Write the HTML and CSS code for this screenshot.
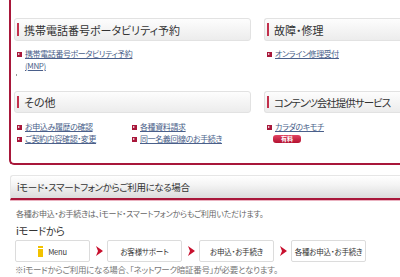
FILE: index.html
```html
<!DOCTYPE html>
<html lang="ja">
<head>
<meta charset="utf-8">
<link rel="stylesheet" href="styles.css">
</head>
<body>
<div class="panel">
  <div class="row row1">
    <section class="col left">
      <h2 class="hd">携帯電話番号ポータビリティ予約</h2>
      <ul class="links">
        <li><span class="bul"></span><a href="#">携帯電話番号ポータビリティ予約<br>(MNP)</a></li>
      </ul>
      <span class="tick"></span>
    </section>
    <section class="col right">
      <h2 class="hd">故障・修理</h2>
      <ul class="links">
        <li><span class="bul"></span><a href="#">オンライン修理受付</a></li>
      </ul>
    </section>
  </div>
  <div class="row row2">
    <section class="col left">
      <h2 class="hd">その他</h2>
      <div class="two">
        <ul class="links">
          <li><span class="bul"></span><a href="#">お申込み履歴の確認</a></li>
          <li><span class="bul"></span><a href="#">ご契約内容確認・変更</a></li>
        </ul>
        <ul class="links">
          <li><span class="bul"></span><a href="#">各種資料請求</a></li>
          <li><span class="bul"></span><a href="#">同一名義回線のお手続き</a></li>
        </ul>
      </div>
    </section>
    <section class="col right">
      <h2 class="hd narrow">コンテンツ会社提供サービス</h2>
      <ul class="links">
        <li><span class="bul"></span><a href="#">カラダのキモチ</a></li>
      </ul>
      <span class="badge">有料</span>
    </section>
  </div>
</div>

<section class="imode">
  <h2 class="bighd">iモード・スマートフォンからご利用になる場合</h2>
  <p class="desc">各種お申込・お手続きは、iモード・スマートフォンからもご利用いただけます。</p>
  <h3 class="sub">iモードから</h3>
  <div class="steps">
    <div class="step"><svg class="imark" width="5" height="11" viewBox="0 0 5 11"><rect x="0" y="0" width="5" height="2" fill="#f2c200"/><rect x="0" y="3" width="5" height="8" fill="#f2c200"/></svg>Menu</div>
    <svg class="arr" width="8" height="10" viewBox="0 0 8 10"><path d="M1 0 L8 5 L1 10 L3 5 Z" fill="#c8102e"/></svg>
    <div class="step">お客様サポート</div>
    <svg class="arr" width="8" height="10" viewBox="0 0 8 10"><path d="M1 0 L8 5 L1 10 L3 5 Z" fill="#c8102e"/></svg>
    <div class="step">お申込・お手続き</div>
    <svg class="arr" width="8" height="10" viewBox="0 0 8 10"><path d="M1 0 L8 5 L1 10 L3 5 Z" fill="#c8102e"/></svg>
    <div class="step">各種お申込・お手続き</div>
  </div>
  <p class="note">※iモードからご利用になる場合、「ネットワーク暗証番号」が必要となります。</p>
</section>
</body>
</html>
```

FILE: styles.css
```css
* { box-sizing: border-box; margin: 0; padding: 0; }
html, body { background: #fff; overflow: hidden; }
body {
  width: 400px;
  height: 277px;
  font-family: "Noto Sans CJK JP", "Noto Sans", sans-serif;
  font-feature-settings: "palt";
  color: #333;
}
ul { list-style: none; }

.panel {
  margin-left: 9px;
  width: 391px;
  overflow: hidden;
  border-left: 2px solid #a8173a;
  border-bottom: 2px solid #a8173a;
  border-bottom-left-radius: 5px;
  padding: 18px 0 19px 3px;
}
.row { display: flex; gap: 13px; }
.row1 { height: 73px; }
.row2 { height: 53px; }
.col { position: relative; flex: none; }
.col.left { width: 237px; }
.col.right { width: 136px; }

.hd {
  height: 22px;
  display: flex;
  align-items: center;
  font-size: 11px;
  font-weight: normal;
  color: #333;
  border: 1px solid #e2e2e2;
  border-right: none;
  border-radius: 3px 0 0 3px;
  background: linear-gradient(#fdfdfd, #ececec);
  padding-left: 9px;
  position: relative;
  white-space: nowrap;
  overflow: hidden;
}
.left .hd { border-right: 1px solid #e2e2e2; border-radius: 3px; }
.hd.narrow { font-size: 10.5px; letter-spacing: -1px; }
.row1 .hd { height: 23px; }
.hd::before {
  content: "";
  position: absolute;
  left: 2px;
  top: 4px;
  bottom: 4px;
  width: 2px;
  background: #c2304c;
}

.links { padding-left: 3px; }
.row1 .links { margin-top: 7px; }
.row2 .links { margin-top: 8px; }
.links li {
  display: flex;
  align-items: flex-start;
  font-size: 8px;
  letter-spacing: -0.4px;
  line-height: 12px;
  white-space: nowrap;
}
.bul {
  flex: none;
  width: 5px;
  height: 5px;
  margin: 4px 3px 0 0;
  background: #a8173a;
  position: relative;
}
.bul::after {
  content: "";
  position: absolute;
  left: 1px;
  top: 1px;
  border-left: 2px solid #fff;
  border-top: 1.5px solid transparent;
  border-bottom: 1.5px solid transparent;
}
.links a { color: #4a5f8a; text-decoration: underline; }

.tick {
  position: absolute;
  left: 2px;
  top: 56px;
  width: 1px;
  height: 2px;
  background: #999;
}

.two { display: flex; }
.two .links { width: 115px; }

.badge {
  display: block;
  margin: 2px 0 0 9px;
  width: 28px;
  height: 8px;
  border-radius: 3px;
  background: linear-gradient(#e24563, #b3102f);
  color: #fff;
  font-size: 6px;
  line-height: 8px;
  text-align: center;
  font-weight: bold;
}

.imode { padding: 10px 0 0 10px; width: 400px; overflow: hidden; }
.bighd {
  height: 25px;
  width: 390px;
  font-size: 9.5px;
  letter-spacing: -0.4px;
  font-weight: normal;
  color: #333;
  display: flex;
  align-items: center;
  padding-left: 6px;
  border-top: 1px solid #e6e6e6;
  border-left: 1px solid #e6e6e6;
  border-top-left-radius: 3px;
  background: linear-gradient(#ffffff, #f4f4f4 40%, #dcdcdc);
  border-bottom: 2px solid #a8173a;
  box-shadow: 0 1px 0 #eab2c0;
}
.desc {
  font-size: 8px;
  letter-spacing: -0.25px;
  color: #666;
  line-height: 12px;
  margin: 8px 0 0 6px;
  white-space: nowrap;
}
.sub {
  font-size: 10.5px;
  letter-spacing: -0.4px;
  font-weight: normal;
  color: #333;
  line-height: 14px;
  margin: 4px 0 0 6px;
}
.steps {
  display: flex;
  align-items: center;
  margin: 2px 0 0 5px;
}
.step {
  flex: none;
  width: 75px;
  height: 22px;
  border: 1px solid #dcdcdc;
  border-radius: 2px;
  background: #fff;
  font-size: 7.5px;
  letter-spacing: -0.2px;
  color: #333;
  display: flex;
  align-items: center;
  justify-content: center;
  gap: 5px;
  white-space: nowrap;
}
.arr { margin: 0 4px 0 5px; flex: none; }
.note {
  font-size: 8.5px;
  letter-spacing: -0.3px;
  color: #777;
  line-height: 12px;
  margin: 1px 0 0 5px;
  white-space: nowrap;
}
```
